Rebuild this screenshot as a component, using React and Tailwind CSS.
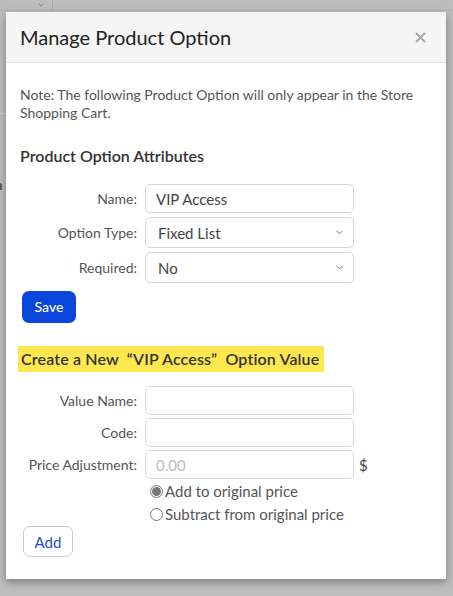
import { ChevronDown } from 'lucide-react'

const FONT = { fontFamily: 'Lato, "Open Sans", sans-serif' }

function Field({ label, children, after }) {
  return (
    <div className="flex items-center">
      <label className="w-[118px] shrink-0 pr-[1px] text-right text-[14px] leading-[18px] text-[#555]">{label}</label>
      <div className="ml-[7px] w-[209px]">{children}</div>
      {after}
    </div>
  )
}

function TextInput({ value, placeholder }) {
  return (
    <input
      type="text"
      defaultValue={value}
      placeholder={placeholder}
      className="block h-[29px] w-full rounded-[5px] border border-[#d6d6d6] bg-white px-[10px] text-[15px] text-[#444] outline-none placeholder:text-[#bbb]"
    />
  )
}

function Select({ value }) {
  return (
    <div className="flex h-[31px] w-full items-center justify-between rounded-[5px] border border-[#d6d6d6] bg-white pl-[12px] pr-[8px] text-[15px] leading-[18px] text-[#444]">
      <span>{value}</span>
      <ChevronDown size={11} strokeWidth={2} className="text-[#666]" />
    </div>
  )
}

function Radio({ checked, label }) {
  return (
    <label className="flex h-[20px] items-center text-[15px] leading-[18px] text-[#555]">
      <span className="flex h-[13px] w-[13px] items-center justify-center rounded-full border border-[#777] bg-white">
        {checked && <span className="h-[9px] w-[9px] rounded-full bg-[#777]" />}
      </span>
      <span className="ml-[2px]">{label}</span>
    </label>
  )
}

export default function App() {
  return (
    <div className="relative h-screen w-full overflow-hidden bg-[#bdbdbd]" style={FONT}>
      {/* page underneath the dialog */}
      <div className="flex h-[11px] border-b border-[#b3b3b3]">
        <div className="flex w-[53px] justify-end border-r border-[#aaa] pr-[7px]">
          <ChevronDown size={8} strokeWidth={2} className="mt-[1px] text-[#555]" />
        </div>
      </div>
      <div className="mt-[102px] h-px w-[6px] bg-[#cfcfcf]" />
      <div className="mt-[62px] -ml-[4px] text-[13px] text-[#333]">a</div>

      {/* dialog */}
      <div className="absolute left-[6px] top-[12px] w-[440px] bg-white shadow-[0_3px_8px_rgba(0,0,0,0.35)]">
        <div className="flex h-[51px] items-center justify-between border-b border-[#e3e3e3] bg-[#f5f5f5] pl-[14px] pr-[20px]">
          <h1 className="text-[20px] leading-[24px] text-[#222]">Manage Product Option</h1>
          <svg width="11" height="11" viewBox="0 0 11 11" className="mt-[1px]">
            <path d="M1 1L10 10M10 1L1 10" stroke="#aaa" strokeWidth="2" />
          </svg>
        </div>

        <div className="flex flex-col items-start px-[14px] pb-[22px] pt-[23px]">
          <p className="text-[14px] leading-[18px] text-[#555]">
            Note: The following Product Option will only appear in the Store Shopping Cart.
          </p>

          <h2 className="mt-[24px] text-[16px] font-semibold leading-[20px] text-[#333]">Product Option Attributes</h2>

          <div className="mt-[18px] flex flex-col gap-[4px]">
            <Field label="Name:"><TextInput value="VIP Access" /></Field>
            <Field label="Option Type:"><Select value="Fixed List" /></Field>
            <Field label="Required:"><Select value="No" /></Field>
          </div>

          <button className="ml-[2px] mt-[8px] block h-[32px] w-[54px] rounded-[7px] bg-[#0a46dc] text-[14px] font-medium leading-[18px] text-white">
            Save
          </button>

          <h2 className="-ml-[2px] mt-[23px] bg-[#fde84f] py-[3px] pl-[3px] pr-[5px] text-[16px] font-semibold leading-[20px] tracking-[0.15px] text-[#333]">
            Create a New &nbsp;“VIP Access” &nbsp;Option Value
          </h2>

          <div className="mt-[14px] flex flex-col gap-[3px]">
            <Field label="Value Name:"><TextInput /></Field>
            <Field label="Code:"><TextInput /></Field>
            <Field label="Price Adjustment:" after={<span className="ml-[5px] text-[15px] leading-[18px] text-[#444]">$</span>}>
              <TextInput placeholder="0.00" />
            </Field>
          </div>

          <div className="ml-[130px] mt-[2px] flex flex-col gap-[3px]">
            <Radio checked label="Add to original price" />
            <Radio label="Subtract from original price" />
          </div>

          <button className="ml-[3px] mt-[2px] block h-[31px] w-[50px] rounded-[7px] border border-[#ccc] bg-white text-[15px] leading-[18px] text-[#1a4fd6]">
            Add
          </button>
        </div>
      </div>
    </div>
  )
}
